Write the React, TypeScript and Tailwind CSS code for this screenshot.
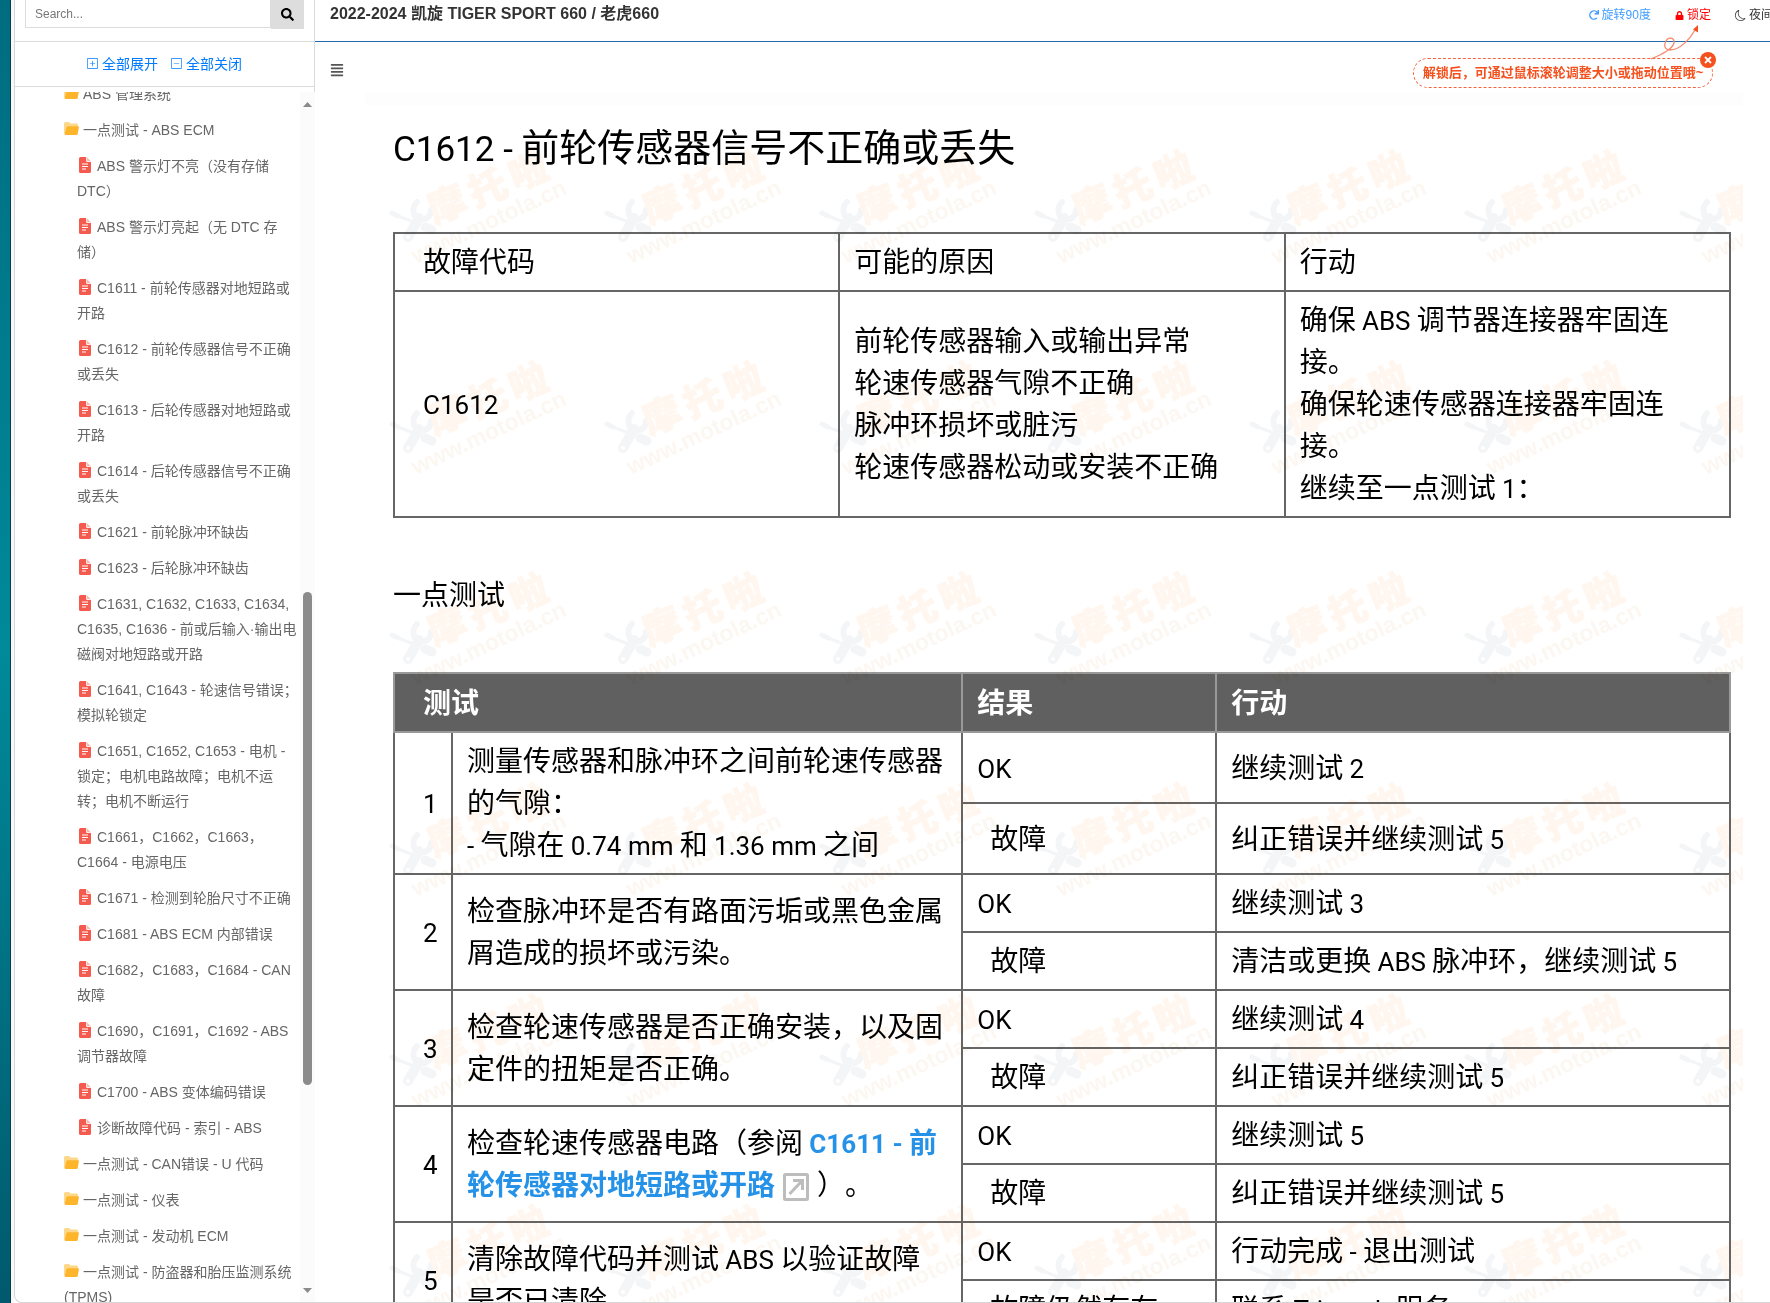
import type { ReactNode } from 'react'
import { BsDashSquare, BsMoon, BsPlusSquare } from 'react-icons/bs'
import { FaAlignJustify, FaLock, FaRedo, FaSearch } from 'react-icons/fa'

const files = [
  'ABS 警示灯不亮（没有存储 DTC）',
  'ABS 警示灯亮起（无 DTC 存储）',
  'C1611 - 前轮传感器对地短路或开路',
  'C1612 - 前轮传感器信号不正确或丢失',
  'C1613 - 后轮传感器对地短路或开路',
  'C1614 - 后轮传感器信号不正确或丢失',
  'C1621 - 前轮脉冲环缺齿',
  'C1623 - 后轮脉冲环缺齿',
  'C1631, C1632, C1633, C1634, C1635, C1636 - 前或后输入·输出电磁阀对地短路或开路',
  'C1641, C1643 - 轮速信号错误；模拟轮锁定',
  'C1651, C1652, C1653 - 电机 - 锁定；电机电路故障；电机不运转；电机不断运行',
  'C1661，C1662，C1663，C1664 - 电源电压',
  'C1671 - 检测到轮胎尺寸不正确',
  'C1681 - ABS ECM 内部错误',
  'C1682，C1683，C1684 - CAN 故障',
  'C1690，C1691，C1692 - ABS 调节器故障',
  'C1700 - ABS 变体编码错误',
  '诊断故障代码 - 索引 - ABS',
]

const foldersBelow = [
  '一点测试 - CAN错误 - U 代码',
  '一点测试 - 仪表',
  '一点测试 - 发动机 ECM',
  '一点测试 - 防盗器和胎压监测系统 (TPMS)',
]

const tests: { step: ReactNode; ok: string; fail: string; failLabel?: string }[] = [
  {
    step: (
      <>
        <Mixed text="测量传感器和脉冲环之间前轮速传感器的气隙：" />
        <br />
        <Mixed text="- 气隙在 0.74 mm 和 1.36 mm 之间" />
      </>
    ),
    ok: '继续测试 2',
    fail: '纠正错误并继续测试 5',
  },
  {
    step: '检查脉冲环是否有路面污垢或黑色金属屑造成的损坏或污染。',
    ok: '继续测试 3',
    fail: '清洁或更换 ABS 脉冲环，继续测试 5',
  },
  {
    step: '检查轮速传感器是否正确安装，以及固定件的扭矩是否正确。',
    ok: '继续测试 4',
    fail: '纠正错误并继续测试 5',
  },
  {
    step: (
      <>
        检查轮速传感器电路（参阅{' '}
        <a href="#c1611" className="font-bold text-[#2592e8]">
          <Mixed text="C1611 - 前轮传感器对地短路或开路" />
          <ExternalIcon />
        </a>
        ）。
      </>
    ),
    ok: '继续测试 5',
    fail: '纠正错误并继续测试 5',
  },
  {
    step: <Mixed text="清除故障代码并测试 ABS 以验证故障是否已清除。" />,
    ok: '行动完成 - 退出测试',
    fail: '联系 Triumph 服务',
    failLabel: '故障仍然存在',
  },
]

// Latin runs are set in Roboto, a little smaller than the Chinese around them
function Mixed({ text, large }: { text: string; large?: boolean }) {
  return (
    <>
      {text.split(/([A-Za-z0-9.-]+(?: [A-Za-z0-9.-]+)*)/).map((part, i) =>
        i % 2 ? (
          <span key={i} className={`font-[Roboto,sans-serif] leading-none ${large ? 'text-[35px]' : 'text-[26px]'}`}>
            {part}
          </span>
        ) : (
          part
        ),
      )}
    </>
  )
}

function FolderIcon() {
  return (
    <svg width="15" height="14" viewBox="0 0 15 14" className="mr-1 inline-block align-[-1px]" aria-hidden="true">
      <path d="M0 1.5Q0 0 1.5 0H5l1.6 1.6h6q1.4 0 1.4 1.4v2H2.5L1 12Q0 12 0 10.500z" fill="#fdd88a" />
      <path d="M3.600 4.200h10.400q1.100 0 .9 1.100l-1.200 6.700q-.2 1.100-1.300 1.100H1.600q-1.100 0-.9-1.100L2.300 5.300q.2-1.100 1.300-1.100z" fill="#fdb52b" />
    </svg>
  )
}

function FileIcon() {
  return (
    <svg width="12" height="16" viewBox="0 0 12 16" className="mr-[6px] ml-[2px] inline-block align-[-2px]" aria-hidden="true">
      <path d="M1.500 0H7v3.500Q7 5 8.500 5H12v9.500q0 1.500-1.500 1.500h-9Q0 16 0 14.500v-13Q0 0 1.500 0z" fill="#f55a4e" />
      <path d="M7.600 0 12 4.200H8.800q-1.200 0-1.200-1.200z" fill="#fbb9b4" />
      <path d="M3 7h6M3 9.500h6M3 12h4" stroke="#fff" strokeWidth="1.200" />
    </svg>
  )
}

function ExternalIcon() {
  return (
    <svg width="26" height="28" viewBox="0 0 26 28" className="mx-2 inline-block align-[-6px]" fill="none" stroke="#bdbdbd" aria-hidden="true">
      <rect x="1.500" y="1.500" width="23" height="25" rx="1" strokeWidth="3" />
      <path d="M6.500 21 18 9" strokeWidth="3" />
      <path d="M10 7.500h9.500V17" strokeWidth="3" />
    </svg>
  )
}

function Watermark() {
  return (
    <svg className="pointer-events-none absolute inset-0 h-full w-full mix-blend-multiply" aria-hidden="true">
      <defs>
        <pattern id="mark" x="20" y="54" width="215" height="211" patternUnits="userSpaceOnUse">
          <g fill="none" stroke="#f4f5f7" strokeLinecap="round">
            <path d="M7 67l6 3" strokeWidth="5" />
            <path d="M13 70l13 5" strokeWidth="3" />
            <path d="M40 81l7 3" strokeWidth="9" />
            <path d="M32 56C26 62 28 72 35 73c7 1 11-3 11-9" strokeWidth="6" />
            <path d="M34 72 23 91" strokeWidth="10" />
          </g>
          <circle cx="23" cy="91" r="2" fill="#fff" />
          <g
            transform="translate(67 71) rotate(-22)"
            fill="#fff7ef"
            stroke="#fff7ef"
            textAnchor="middle"
            className="font-['Noto_Sans_CJK_SC',sans-serif] text-[38px] font-black"
          >
            <text>摩</text>
            <text x="44">托</text>
            <text x="88">啦</text>
          </g>
          <g transform="translate(31 118) rotate(-25)">
            <text fill="#fdf7f2" className="font-['Liberation_Sans',sans-serif] text-[23px] font-bold">
              www.motola.cn
            </text>
          </g>
        </pattern>
      </defs>
      <rect width="100%" height="100%" fill="url(#mark)" />
    </svg>
  )
}

function Sidebar() {
  return (
    <aside className="flex w-[300px] shrink-0 flex-col">
      <div className="border-r border-[#d9dcdd] pb-[5px]">
        <form className="flex h-[42px] items-start border-b border-[#d9dcdd] px-[10px]">
          <input
            type="search"
            aria-label="Search"
            placeholder="Search..."
            className="h-7 min-w-0 flex-1 border border-t-0 border-[#ddd] px-[9px] text-xs outline-none placeholder:text-[#777]"
          />
          <button type="button" aria-label="搜索" className="flex h-[29px] w-[33px] items-center justify-center bg-[#ddd] text-black">
            <FaSearch size={13} />
          </button>
        </form>
        <div className="flex h-[45px] items-center justify-center gap-[13px] border-b border-[#d9dcdd] pb-px text-sm text-[#007bff]">
          <button type="button" className="flex items-center gap-1">
            <BsPlusSquare size={11} />
            全部展开
          </button>
          <button type="button" className="flex items-center gap-1">
            <BsDashSquare size={11} />
            全部关闭
          </button>
        </div>
      </div>

      <div className="flex min-h-0 flex-1">
        <ul className="-mt-[15px] min-w-0 flex-1 overflow-hidden pl-[49px] text-sm leading-[25px] text-[#666] [clip-path:inset(15px_0_0_0)]">
          <li>
            <a href="#abs" className="block pt-[5px] pb-[6px]">
              <FolderIcon />
              ABS 管理系统
            </a>
          </li>
          <li>
            <a href="#abs-ecm" className="block pt-[5px] pb-[6px]">
              <FolderIcon />
              一点测试 - ABS ECM
            </a>
            <ul className="pl-[13px]">
              {files.map((name) => (
                <li key={name}>
                  <a href="#file" className="block pt-[5px] pb-[6px]">
                    <FileIcon />
                    {name}
                  </a>
                </li>
              ))}
            </ul>
          </li>
          {foldersBelow.map((name) => (
            <li key={name}>
              <a href="#folder" className="block pt-[5px] pb-[6px]">
                <FolderIcon />
                {name}
              </a>
            </li>
          ))}
        </ul>
        <div className="flex w-[15px] flex-col items-center bg-[#fbfbfb] pt-[10px] pb-[9px]" aria-hidden="true">
          <svg width="9" height="5" viewBox="0 0 9 5" fill="#8b8b8b">
            <path d="M4.500 0 9 5H0z" />
          </svg>
          <span className="grow-[485]" />
          <span className="w-[9px] grow-[492] rounded-full bg-[#8b8b8b]" />
          <span className="grow-[203]" />
          <svg width="9" height="5" viewBox="0 0 9 5" fill="#8b8b8b">
            <path d="M0 0h9L4.500 5z" />
          </svg>
        </div>
      </div>
    </aside>
  )
}

function UnlockTip() {
  return (
    <div className="absolute top-[58px] right-[57px] flex h-[30px] w-[300px] items-center justify-center rounded-full border border-dashed border-[#f4633c] text-[13px] font-bold whitespace-nowrap text-[#f4511e]">
      解锁后，可通过鼠标滚轮调整大小或拖动位置哦~
      <svg width="54" height="38" viewBox="0 0 54 38" className="absolute right-[10px] bottom-[27px]" fill="none" aria-hidden="true">
        <path d="M3 37C12 33 24 28 26 21c1-6-6-6-8-2-3 6 0 9 4 9C32 28 42 17 47 8" stroke="#f58a6c" strokeWidth="1.300" />
        <path d="M50 3v7.500l-5-3z" fill="#f4511e" />
      </svg>
      <button type="button" aria-label="关闭" className="absolute -top-[7px] -right-1 flex h-4 w-4 items-center justify-center rounded-full bg-[#f4511e]">
        <svg width="8" height="8" viewBox="0 0 8 8" stroke="#fff" strokeWidth="1.800">
          <path d="M1 1l6 6M7 1 1 7" />
        </svg>
      </button>
    </div>
  )
}

export default function App() {
  return (
    <div className="flex h-screen overflow-hidden bg-white font-['Liberation_Sans','Noto_Sans_CJK_SC',sans-serif] [text-spacing-trim:space-all]">
      {/* strip of desktop left of the window */}
      <div className="w-[11px] shrink-0 border-r border-[#0b3a48] bg-linear-to-b from-[#006c80] via-[#008a9a] to-[#00596c]" />
      <div className="w-[3px] shrink-0 bg-[#f7f8f8]" />

      <div className="flex min-w-0 flex-1 overflow-hidden rounded-bl-lg border-b border-l border-[#d4d6d7]">
        <Sidebar />

        <main className="relative flex min-w-0 flex-1 flex-col">
          <header className="flex h-[42px] shrink-0 items-start justify-between border-b border-[#2069ad] pl-[15px]">
            <h1 className="text-base leading-7 font-bold text-[#333]">2022-2024 凯旋 TIGER SPORT 660 / 老虎660</h1>
            <nav className="-mr-[3px] flex gap-6 text-xs leading-[30px] whitespace-nowrap">
              <button type="button" className="flex items-center gap-[3px] text-[#409eff]">
                <FaRedo size={10} />
                旋转90度
              </button>
              <button type="button" className="flex items-center gap-[3px] text-[#f00]">
                <FaLock size={9} />
                锁定
              </button>
              <button type="button" className="flex items-center gap-[3px] text-[#333]">
                <BsMoon size={11} />
                夜间
              </button>
            </nav>
          </header>
          <UnlockTip />

          <div className="flex h-[50px] shrink-0 items-center pt-[6px] pl-[15px]">
            <button type="button" aria-label="菜单" className="text-[#555]">
              <FaAlignJustify size={14} />
            </button>
          </div>

          <article className="relative mr-[27px] ml-[50px] min-h-0 flex-1 overflow-hidden pr-3 pl-7 font-['Noto_Sans_CJK_SC',sans-serif] text-[28px] leading-[42px] text-black">
            <div className="-mr-3 -ml-7 h-[13px] bg-[#fdfdfd]" />
            <h2 className="pt-3 text-[38px] leading-[56px]">
              <Mixed large text="C1612 - 前轮传感器信号不正确或丢失" />
            </h2>

            <table className="mt-[59px] w-full table-fixed border-collapse text-left [&_td]:border-2 [&_td]:border-[#666] [&_td]:pt-[5px] [&_td]:pr-4 [&_td]:pb-[9px] [&_td]:pl-[14px] [&_th]:border-2 [&_th]:border-[#666] [&_th]:pt-[5px] [&_th]:pb-[9px] [&_th]:pl-[14px] [&_th]:font-normal">
              <thead>
                <tr>
                  <th className="pl-[28px]!">故障代码</th>
                  <th>可能的原因</th>
                  <th>行动</th>
                </tr>
              </thead>
              <tbody>
                <tr>
                  <td className="pl-[28px]!">
                    <Mixed text="C1612" />
                  </td>
                  <td>
                    前轮传感器输入或输出异常
                    <br />
                    轮速传感器气隙不正确
                    <br />
                    脉冲环损坏或脏污
                    <br />
                    轮速传感器松动或安装不正确
                  </td>
                  <td>
                    <Mixed text="确保 ABS 调节器连接器牢固连接。" />
                    <br />
                    确保轮速传感器连接器牢固连接。
                    <br />
                    <Mixed text="继续至一点测试 1：" />
                  </td>
                </tr>
              </tbody>
            </table>

            <h3 className="mt-[54px]">一点测试</h3>

            <table className="mt-[58px] w-full table-fixed border-collapse text-left [&_td]:border-2 [&_td]:border-[#666] [&_td]:pt-[5px] [&_td]:pb-[9px] [&_td]:pl-[14px] [&_th]:border-2 [&_th]:border-[#999] [&_th]:pt-[6px] [&_th]:pb-[9px] [&_th]:pl-[14px]">
              <colgroup>
                <col className="w-[58px]" />
                <col className="w-[38.2%]" />
                <col className="w-[19%]" />
                <col />
              </colgroup>
              <thead className="bg-[#606060] text-white">
                <tr>
                  <th colSpan={2} className="pl-[28px]!">
                    测试
                  </th>
                  <th>结果</th>
                  <th>行动</th>
                </tr>
              </thead>
              {tests.map((t, i) => (
                <tbody key={i}>
                  <tr>
                    <td rowSpan={2} className="pl-[28px]!">
                      <Mixed text={String(i + 1)} />
                    </td>
                    <td rowSpan={2} className="pr-[17px]">
                      {t.step}
                    </td>
                    <td>
                      <Mixed text="OK" />
                    </td>
                    <td>
                      <Mixed text={t.ok} />
                    </td>
                  </tr>
                  <tr>
                    <td className="pl-[27px]!">{t.failLabel ?? '故障'}</td>
                    <td>
                      <Mixed text={t.fail} />
                    </td>
                  </tr>
                </tbody>
              ))}
            </table>
            <Watermark />
          </article>
        </main>
      </div>
    </div>
  )
}
